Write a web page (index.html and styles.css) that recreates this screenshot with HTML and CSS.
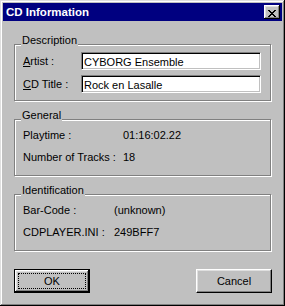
FILE: index.html
```html
<!DOCTYPE html>
<html lang="en">

<head>
    <meta charset="UTF-8">
    <meta name="viewport" content="width=device-width, initial-scale=1.0">
    <title>CD Information</title>
    <link rel="stylesheet" href="styles.css">
</head>

<body>
    <div class="dialog">
        <div class="titlebar">
            <span class="title">CD Information</span>
            <button class="close-btn" type="button" aria-label="Close">
                <svg width="8" height="7" viewBox="0 0 8 7" shape-rendering="crispEdges">
                    <path d="M0 0h2v1h-2zM6 0h2v1h-2zM1 1h2v1h-2zM5 1h2v1h-2zM2 2h4v1h-4zM3 3h2v1h-2zM2 4h4v1h-4zM1 5h2v1h-2zM5 5h2v1h-2zM0 6h2v1h-2zM6 6h2v1h-2z" fill="#000" />
                </svg>
            </button>
        </div>

        <div class="content">
            <div class="group group-desc">
                <span class="legend">Description</span>
                <div class="field-grid">
                    <label for="artist"><u>A</u>rtist :</label>
                    <input type="text" id="artist" class="text-input" value="CYBORG Ensemble">
                    <label for="title"><u>C</u>D Title :</label>
                    <input type="text" id="title" class="text-input" value="Rock en Lasalle">
                </div>
            </div>

            <div class="group group-info">
                <span class="legend">General</span>
                <div class="info-grid info-general">
                    <span>Playtime :</span>
                    <span>01:16:02.22</span>
                    <span>Number of Tracks :</span>
                    <span>18</span>
                </div>
            </div>

            <div class="group group-info">
                <span class="legend">Identification</span>
                <div class="info-grid info-ident">
                    <span>Bar-Code :</span>
                    <span>(unknown)</span>
                    <span>CDPLAYER.INI :</span>
                    <span>249BFF7</span>
                </div>
            </div>

            <div class="buttons">
                <button type="button" class="btn btn-default"><span class="btn-face">OK</span></button>
                <button type="button" class="btn"><span class="btn-face">Cancel</span></button>
            </div>
        </div>
    </div>
</body>

</html>
```

FILE: styles.css
```css
* {
    margin: 0;
    padding: 0;
    box-sizing: border-box;
}

:root {
    --face: #c0c0c0;
    --light: #dfdfdf;
    --shadow: #808080;
    --title: #000080;
}

body {
    background: var(--face);
    font-family: 'Liberation Sans', Arial, sans-serif;
    font-size: 11px;
    line-height: 13px;
    color: #000;
}

.dialog {
    width: 285px;
    height: 306px;
    padding: 3px;
    background: var(--face);
    box-shadow: inset -1px -1px #000, inset 1px 1px var(--light),
        inset -2px -2px var(--shadow), inset 2px 2px #fff;
    display: flex;
    flex-direction: column;
}

.titlebar {
    height: 18px;
    background: var(--title);
    display: flex;
    align-items: center;
    justify-content: space-between;
    padding-left: 3px;
}

.title {
    color: #fff;
    font-weight: bold;
    font-size: 11.5px;
    line-height: 18px;
}

.close-btn {
    display: block;
    width: 16px;
    height: 14px;
    margin-right: 2px;
    border: none;
    background: var(--face);
    box-shadow: inset -1px -1px #000, inset 1px 1px #fff,
        inset -2px -2px var(--shadow), inset 2px 2px var(--light);
}

.close-btn svg {
    display: block;
    margin: 3px 0 0 4px;
}

.content {
    flex: 1;
    padding: 23px 10px 0 11px;
    display: flex;
    flex-direction: column;
    gap: 18px;
}

/* etched group box */
.group {
    position: relative;
    width: 257px;
    height: 57px;
    border: 1px solid var(--shadow);
    box-shadow: inset 1px 1px #fff, 1px 1px #fff;
    padding-left: 8px;
}

.legend {
    position: absolute;
    top: -11px;
    left: 6px;
    padding: 0 1px;
    background: var(--face);
}

.group-desc {
    padding-top: 7px;
}

.field-grid {
    display: grid;
    grid-template-columns: 58px 180px;
    row-gap: 5px;
    align-items: center;
}

.field-grid label u {
    text-decoration-thickness: 1px;
}

.text-input {
    width: 180px;
    height: 18px;
    padding: 1px 2px 0;
    font: inherit;
    line-height: 13px;
    color: #000;
    background: #fff;
    border: 1px solid;
    border-color: var(--shadow) #fff #fff var(--shadow);
    box-shadow: inset 1px 1px #000, inset -1px -1px var(--face);
    outline: none;
}

.group-info {
    padding-top: 9px;
}

.info-grid {
    display: grid;
    row-gap: 9px;
}

.info-general {
    grid-template-columns: 100px auto;
}

.info-ident {
    grid-template-columns: 91px auto;
}

.buttons {
    display: flex;
    justify-content: space-between;
}

.btn {
    width: 76px;
    height: 24px;
    display: flex;
    padding: 3px;
    font: inherit;
    color: #000;
    background: var(--face);
    border: 1px solid;
    border-color: #fff #000 #000 #fff;
    box-shadow: inset -1px -1px var(--shadow), inset 1px 1px var(--light);
}

.btn-default {
    border-color: #000;
    box-shadow: inset -1px -1px #000, inset 1px 1px #fff,
        inset -2px -2px var(--shadow), inset 2px 2px var(--light);
}

.btn-face {
    flex: 1;
    display: flex;
    align-items: center;
    justify-content: center;
    border: 1px dotted transparent;
}

.btn-default .btn-face {
    border-color: #000;
}
```
